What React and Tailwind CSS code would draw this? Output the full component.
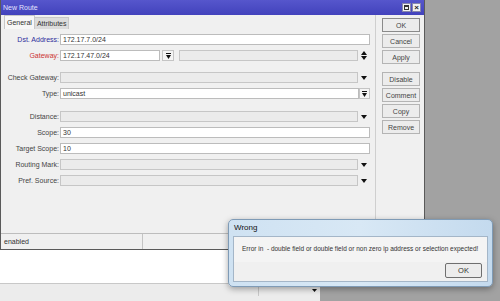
import React from 'react';

function DropArrow() {
  return (
    <div className="w-[12px] h-[11px] flex items-center justify-center">
      <svg width="6" height="4" viewBox="0 0 6 4">
        <path d="M0 0 L6 0 L3 4 Z" fill="#111" />
      </svg>
    </div>
  );
}

function UpDown() {
  return (
    <div className="w-[12px] h-[11px] flex items-center justify-center">
      <svg width="6" height="9" viewBox="0 0 6 9">
        <path d="M0 4 L6 4 L3 0 Z M0 5 L6 5 L3 9 Z" fill="#111" />
      </svg>
    </div>
  );
}

function BarArrow({ w = 'w-[12px]' }) {
  return (
    <div className={`${w} h-[11px] border border-[#c4c4c4] bg-[#f4f4f4] flex items-center justify-center`}>
      <svg width="5" height="6" viewBox="0 0 5 6">
        <path d="M0 0.5 L5 0.5" stroke="#111" strokeWidth="1" />
        <path d="M0 2 L5 2 L2.5 6 Z" fill="#111" />
      </svg>
    </div>
  );
}

function Row({ label, color = 'text-[#444]', children, className = '' }) {
  return (
    <div className={`flex items-center h-[11px] ${className}`}>
      <div className={`w-[59px] pr-[1px] text-right leading-none ${color}`}>{label}</div>
      {children}
    </div>
  );
}

function Field({ value, white, w = 'w-[298px]' }) {
  return (
    <div
      className={`${w} h-[11px] border flex items-center px-[2px] leading-none ${
        white ? 'bg-white border-[#bcbcbc]' : 'bg-[#ebebeb] border-[#c6c6c6]'
      }`}
    >
      {value}
    </div>
  );
}

function Btn({ children, main }) {
  return (
    <div
      className={`w-[38px] h-[14px] flex items-center justify-center leading-none border bg-[#ececec] text-[#444] ${
        main ? 'border-[#8a8a8a]' : 'border-[#b4b4b4]'
      }`}
    >
      {children}
    </div>
  );
}

export default function App() {
  return (
    <div
      className="relative w-[500px] h-[301px] overflow-hidden bg-[#a2a2a2] text-[7px] text-[#333]"
      style={{ fontFamily: '"Liberation Sans", Arial, sans-serif' }}
    >
      {/* Route window */}
      <div className="w-[425px] h-[250px] flex flex-col bg-[#f0f0f0] border-l border-b border-r border-[#5a5a5a]">
        {/* Title bar */}
        <div className="h-[15px] bg-gradient-to-b from-[#5656cc] to-[#4242bc] flex items-center pl-[2px] pr-[3px]">
          <span className="text-[#e4e4ff] leading-none">New Route</span>
          <div className="ml-auto flex gap-[1px]">
            <div className="w-[9px] h-[9px] bg-[#f2f2f2] border border-[#8888aa] flex items-center justify-center">
              <div className="w-[5px] h-[5px] border border-[#333] border-t-2" />
            </div>
            <div className="w-[9px] h-[9px] bg-[#f2f2f2] border border-[#8888aa] flex items-center justify-center text-[8px] font-bold leading-none text-[#222]">
              ×
            </div>
          </div>
        </div>

        {/* Body */}
        <div className="flex flex-1">
          {/* Left pane */}
          <div className="w-[374px] flex flex-col">
            {/* Tabs */}
            <div className="h-[14px] flex items-end pl-[3px]">
              <div className="h-[14px] px-[2px] flex items-center bg-[#f7f7f7] border border-b-0 border-[#c8c8c8] leading-none">
                General
              </div>
              <div className="h-[12px] px-[2px] flex items-center bg-[#dcdcdc] border border-b-0 border-l-0 border-[#c8c8c8] leading-none">
                Attributes
              </div>
            </div>

            <div className="flex flex-col pt-[5px]">
              <Row label="Dst. Address:" color="text-[#2d2d9c]">
                <Field value="172.17.7.0/24" white w="w-[310px]" />
              </Row>
              <Row label="Gateway:" color="text-[#cc3333]" className="mt-[5px]">
                <Field value="172.17.47.0/24" white w="w-[100px]" />
                <div className="ml-[2px]">
                  <BarArrow />
                </div>
                <div className="ml-[5px]">
                  <Field w="w-[179px]" />
                </div>
                <UpDown />
              </Row>
              <Row label="Check Gateway:" className="mt-[11px]">
                <Field />
                <DropArrow />
              </Row>
              <Row label="Type:" className="mt-[5px]">
                <Field value="unicast" white w="w-[299px]" />
                <BarArrow w="w-[11px]" />
              </Row>
              <Row label="Distance:" className="mt-[12px]">
                <Field />
                <DropArrow />
              </Row>
              <Row label="Scope:" className="mt-[5px]">
                <Field value="30" white w="w-[310px]" />
              </Row>
              <Row label="Target Scope:" className="mt-[5px]">
                <Field value="10" white w="w-[310px]" />
              </Row>
              <Row label="Routing Mark:" className="mt-[5px]">
                <Field />
                <DropArrow />
              </Row>
              <Row label="Pref. Source:" className="mt-[5px]">
                <Field />
                <DropArrow />
              </Row>
            </div>
          </div>

          {/* Separator */}
          <div className="w-[1px] bg-[#cfcfcf]" />

          {/* Buttons */}
          <div className="flex flex-col pl-[6px] pt-[3px] gap-[2px]">
            <Btn main>OK</Btn>
            <Btn>Cancel</Btn>
            <Btn>Apply</Btn>
            <div className="h-[4px]" />
            <Btn>Disable</Btn>
            <Btn>Comment</Btn>
            <Btn>Copy</Btn>
            <Btn>Remove</Btn>
          </div>
        </div>

        {/* Status bar */}
        <div className="h-[16px] flex border-t border-[#bdbdbd] leading-none">
          <div className="w-[142px] flex items-center pl-[3px] border-r border-[#c4c4c4]">enabled</div>
          <div className="flex-1" />
        </div>
      </div>

      {/* Area below the window */}
      <div className="w-[320px] flex flex-col">
        <div className="h-[33px] bg-white" />
        <div className="h-[18px] bg-[#ececec] border-t border-[#c8c8c8] flex items-start pt-[1px]">
          <div className="ml-[258px] w-[62px] h-[11px] flex items-center justify-end pr-[3px] border-l border-[#c8c8c8]">
            <svg width="5" height="3" viewBox="0 0 5 3">
              <path d="M0 0 L5 0 L2.5 3 Z" fill="#111" />
            </svg>
          </div>
        </div>
      </div>

      {/* Error dialog */}
      <div className="absolute left-[228px] top-[219px] w-[265px] h-[68px] rounded-[5px] border border-[#7f9bb6] bg-gradient-to-r from-[#cfe2f2] via-[#d8e8f5] to-[#c4daee] shadow-[0_2px_6px_rgba(0,0,0,0.35)] flex flex-col px-[4px] pb-[4px]">
        <div className="h-[16px] flex items-center pl-[1px] text-[8px] leading-none text-[#111]">Wrong</div>
        <div className="flex-1 bg-[#f0f0f0] border border-[#a4b6c8] flex flex-col">
          <div className="h-[25px] bg-[#f4f4f4] flex items-center pl-[8px] text-[6.5px] leading-none text-[#333]">
            Error in&nbsp; - double field or double field or non zero ip address or selection expected!
          </div>
          <div className="flex-1 flex items-start justify-end pr-[5px] pt-[1px]">
            <div className="w-[37px] h-[15px] border border-[#6f6f6f] rounded-[2px] bg-[#ececec] flex items-center justify-center text-[7.5px] leading-none">
              OK
            </div>
          </div>
        </div>
      </div>
    </div>
  );
}
